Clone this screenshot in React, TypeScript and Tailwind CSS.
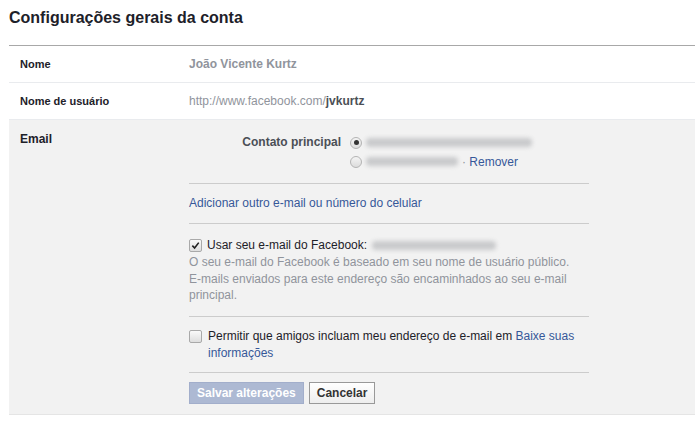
import React from "react";

const FONT = { fontFamily: '"Liberation Sans", Arial, sans-serif' };

function Blur({ w }: { w: number }) {
  return (
    <span
      className="inline-block h-[9px] rounded-sm bg-[#c9cacc] blur-[2px] align-middle"
      style={{ width: w }}
    />
  );
}

function Radio({ checked }: { checked?: boolean }) {
  return (
    <span className="inline-flex h-[12px] w-[12px] items-center justify-center rounded-full border border-[#b4b4b4] bg-gradient-to-b from-[#f4f4f4] to-[#dcdcdc]">
      {checked && <span className="h-[5px] w-[5px] rounded-full bg-[#333]" />}
    </span>
  );
}

function Checkbox({ checked }: { checked?: boolean }) {
  return (
    <span className="inline-flex h-[13px] w-[13px] shrink-0 items-center justify-center rounded-[2px] border border-[#a9a9a9] bg-gradient-to-b from-[#fafafa] to-[#dedede]">
      {checked && (
        <svg viewBox="0 0 10 10" className="h-[9px] w-[9px]">
          <path d="M1.5 5.2 L4 7.8 L8.6 1.8" fill="none" stroke="#222" strokeWidth="1.8" />
        </svg>
      )}
    </span>
  );
}

export default function App() {
  return (
    <div className="min-h-[421px] bg-white pl-[9px] text-[12px] text-[#1d2129]" style={FONT}>
      <h1 className="pt-[8px] pb-[17px] text-[16px] font-bold leading-[20px] text-[#1d2129]">
        Configurações gerais da conta
      </h1>

      <div className="border-t border-[#a8a8a8]">
        <div className="flex h-[37px] items-center border-b border-[#e9ebee]">
          <div className="w-[180px] pl-[11px] text-[11px] font-bold">Nome</div>
          <div className="font-bold text-[#90949c]">João Vicente Kurtz</div>
        </div>
        <div className="flex h-[37px] items-center border-b border-[#e9ebee]">
          <div className="w-[180px] pl-[11px] text-[11px] font-bold">Nome de usuário</div>
          <div className="text-[#90949c]">
            http://www.facebook.com/<span className="font-bold text-[#4b4f56]">jvkurtz</span>
          </div>
        </div>

        <div className="flex border-b border-[#e5e5e5] bg-[#f2f2f2] pt-[12px] pb-[10px]">
          <div className="w-[180px] pl-[11px] font-bold leading-[15px]">Email</div>
          <div className="w-[400px]">
            <div className="mt-[3px] flex pb-[14px]">
              <div className="w-[152px] text-right font-bold leading-[15px] text-[#4b4f56]">Contato principal</div>
              <div className="ml-[9px] flex flex-col gap-[4px]">
                <div className="flex h-[15px] items-center gap-[4px]">
                  <Radio checked />
                  <Blur w={166} />
                </div>
                <div className="flex h-[15px] items-center gap-[4px]">
                  <Radio />
                  <Blur w={92} />
                  <span className="text-[#365899]">
                    <span className="text-[#90949c]">·</span> Remover
                  </span>
                </div>
              </div>
            </div>

            <div className="border-t border-[#cccccc] pt-[11px] pb-[12px] leading-[16px] text-[#365899]">
              Adicionar outro e-mail ou número do celular
            </div>

            <div className="border-t border-[#cccccc] pt-[13px] pb-[12px]">
              <div className="flex h-[16px] items-center gap-[5px]">
                <Checkbox checked />
                <span>Usar seu e-mail do Facebook:</span>
                <Blur w={124} />
              </div>
              <div className="mt-[1px] leading-[16.5px] text-[#90949c]">
                O seu e-mail do Facebook é baseado em seu nome de usuário público.
                <br />
                E-mails enviados para este endereço são encaminhados ao seu e-mail principal.
              </div>
            </div>

            <div className="flex gap-[6px] border-t border-[#cccccc] pt-[11px] pb-[10px] leading-[17px]">
              <span className="pt-[2px]">
                <Checkbox />
              </span>
              <span>
                Permitir que amigos incluam meu endereço de e-mail em{" "}
                <span className="text-[#365899]">Baixe suas informações</span>
              </span>
            </div>

            <div className="flex gap-[5px] border-t border-[#cccccc] pt-[9px]">
              <button className="h-[22px] border border-[#a2aecb] bg-[#adb9d3] px-[7px] font-bold text-white">
                Salvar alterações
              </button>
              <button className="h-[22px] border border-[#999] bg-gradient-to-b from-white to-[#eeeeee] px-[7px] font-bold text-[#333]">
                Cancelar
              </button>
            </div>
          </div>
        </div>
      </div>
    </div>
  );
}
